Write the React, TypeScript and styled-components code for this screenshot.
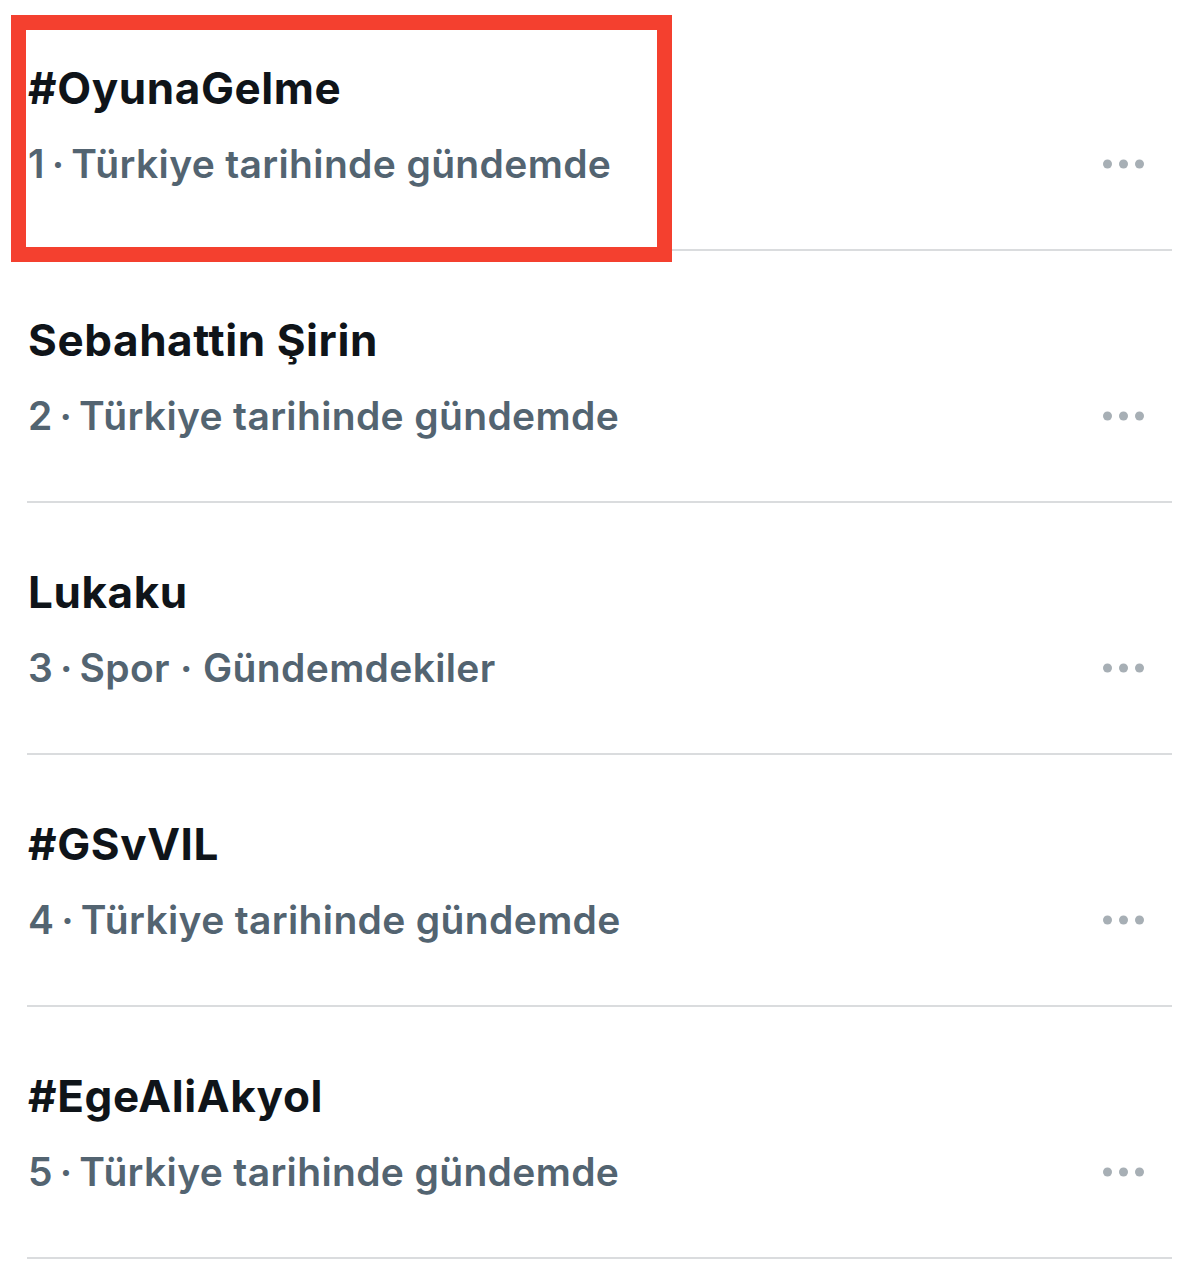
import React from "react";
import styled, { createGlobalStyle } from "styled-components";

const Global = createGlobalStyle`
  html, body { margin: 0; padding: 0; background: #ffffff; }
  body { font-family: Inter, "Noto Sans", "DejaVu Sans", sans-serif; -webkit-font-smoothing: antialiased; }
`;

const Page = styled.main`
  width: 1200px;
  height: 1265px;
  overflow: hidden;
  background: #ffffff;
`;

const List = styled.ul`
  list-style: none;
  margin: 0 28px 0 27px;
  padding: 0;
`;

const Row = styled.li`
  position: relative;
  display: flex;
  flex-direction: column;
  gap: 28px;
  padding: 64px 28px 62px 1px;
  border-bottom: 2px solid #dadcde;
  &:first-child { padding-top: 63px; }
`;

const Title = styled.div`
  font-size: 44px;
  line-height: 50px;
  font-weight: 700;
  color: #0f1419;
  letter-spacing: 0.6px;
`;

const MetaLine = styled.div`
  display: flex;
  align-items: center;
  justify-content: space-between;
`;

const Meta = styled.div`
  font-size: 39px;
  line-height: 46px;
  font-weight: 600;
  color: #536471;
  letter-spacing: 0.35px;
`;

const MoreButton = styled.button`
  border: 0;
  background: transparent;
  padding: 0;
  display: flex;
  align-items: center;
  cursor: pointer;
`;

const Highlight = styled.div`
  position: absolute;
  left: -16px;
  top: 15px;
  width: 661px;
  height: 247px;
  box-sizing: border-box;
  border: 15px solid #f4402f;
  pointer-events: none;
`;

const Dots = () => (
  <svg width="41" height="10" viewBox="0 0 41 10" aria-hidden>
    <circle cx="4.5" cy="5" r="4.5" fill="#a7afb5" />
    <circle cx="20.5" cy="5" r="4.5" fill="#a7afb5" />
    <circle cx="36.5" cy="5" r="4.5" fill="#a7afb5" />
  </svg>
);

type Trend = { title: string; meta: string; highlighted?: boolean };

const trends: Trend[] = [
  { title: "#OyunaGelme", meta: "1\u2009·\u2009Türkiye tarihinde gündemde", highlighted: true },
  { title: "Sebahattin Şirin", meta: "2\u2009·\u2009Türkiye tarihinde gündemde" },
  { title: "Lukaku", meta: "3\u2009·\u2009Spor · Gündemdekiler" },
  { title: "#GSvVIL", meta: "4\u2009·\u2009Türkiye tarihinde gündemde" },
  { title: "#EgeAliAkyol", meta: "5\u2009·\u2009Türkiye tarihinde gündemde" },
];

export default function App() {
  return (
    <Page>
      <Global />
      <List>
        {trends.map((t) => (
          <Row key={t.title}>
            <Title>{t.title}</Title>
            <MetaLine>
              <Meta>{t.meta}</Meta>
              <MoreButton aria-label="Daha fazla">
                <Dots />
              </MoreButton>
            </MetaLine>
            {t.highlighted && <Highlight />}
          </Row>
        ))}
      </List>
    </Page>
  );
}
